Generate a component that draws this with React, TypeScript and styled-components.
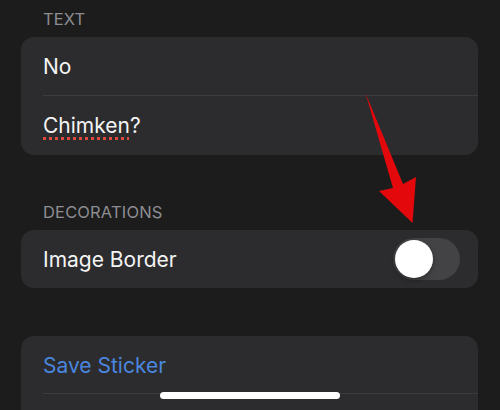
import React from "react";
import styled, { createGlobalStyle } from "styled-components";

const Global = createGlobalStyle`
  html, body { margin: 0; padding: 0; background: #1c1c1c; }
  body { font-family: Inter, "Noto Sans", "Liberation Sans", sans-serif; -webkit-font-smoothing: antialiased; }
`;

const Page = styled.div`
  position: relative;
  width: 500px;
  height: 410px;
  overflow: hidden;
  background: #1c1c1c;
  padding: 9px 22px 0 21px;
  box-sizing: border-box;
  display: flex;
  flex-direction: column;
`;

const SectionHeader = styled.div<{ $top?: number }>`
  font-size: 16.5px;
  line-height: 20px;
  color: #8d8d92;
  padding-left: 22px;
  margin-top: ${(p) => p.$top ?? 0}px;
  margin-bottom: 8px;
  letter-spacing: 0.15px;
`;

const Card = styled.div<{ $top?: number }>`
  background: #2c2c2e;
  border-radius: 13px;
  margin-top: ${(p) => p.$top ?? 0}px;
  display: flex;
  flex-direction: column;
  flex-shrink: 0;
`;

const Row = styled.div<{ $h?: number; $sep?: boolean }>`
  position: relative;
  height: ${(p) => p.$h ?? 59}px;
  display: flex;
  align-items: center;
  justify-content: space-between;
  padding: 0 18px 0 22px;
  &::after {
    content: "";
    display: ${(p) => (p.$sep ? "block" : "none")};
    position: absolute;
    left: 22px;
    right: 0;
    bottom: 0;
    height: 1px;
    background: #3c3c3e;
  }
`;

const Label = styled.span<{ $blue?: boolean }>`
  font-size: 21px;
  color: ${(p) => (p.$blue ? "#4a86df" : "#f4f4f4")};
  letter-spacing: 0;
`;

const Misspelled = styled.span`
  text-decoration-line: underline;
  text-decoration-style: dotted;
  text-decoration-color: #df4a3e;
  text-decoration-thickness: 3px;
  text-underline-offset: 4px;
`;

const Track = styled.div`
  width: 67px;
  height: 42px;
  border-radius: 21px;
  background: #434346;
  display: flex;
  align-items: center;
  padding: 0 2px;
  box-sizing: border-box;
`;

const Knob = styled.div`
  width: 38px;
  height: 38px;
  border-radius: 50%;
  background: #ffffff;
  box-shadow: 0 2px 5px rgba(0, 0, 0, 0.35);
`;

const HomeIndicator = styled.div`
  position: absolute;
  left: 160px;
  top: 392px;
  width: 180px;
  height: 7px;
  border-radius: 4px;
  background: #ffffff;
`;

const ArrowSvg = styled.svg`
  position: absolute;
  left: 0;
  top: 0;
  pointer-events: none;
`;

export default function App() {
  return (
    <>
      <Global />
      <Page>
        <SectionHeader>TEXT</SectionHeader>
        <Card>
          <Row $sep>
            <Label>No</Label>
          </Row>
          <Row>
            <Label>
              <Misspelled>Chimken</Misspelled>?
            </Label>
          </Row>
        </Card>
        <SectionHeader $top={47}>DECORATIONS</SectionHeader>
        <Card>
          <Row $h={58}>
            <Label>Image Border</Label>
            <Track>
              <Knob />
            </Track>
          </Row>
        </Card>
        <Card $top={48}>
          <Row $h={58} $sep>
            <Label $blue>Save Sticker</Label>
          </Row>
          <Row $h={58} />
        </Card>
        <ArrowSvg width="500" height="410" viewBox="0 0 500 410">
          <polygon
            points="365.5,93 403,184 416,177 412.5,223 379,191 393,188"
            fill="#e3080b"
          />
        </ArrowSvg>
        <HomeIndicator />
      </Page>
    </>
  );
}
